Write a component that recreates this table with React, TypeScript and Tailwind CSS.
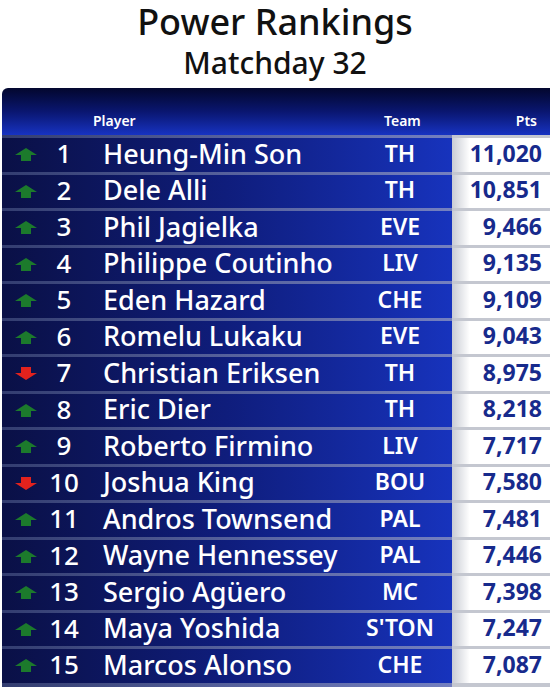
import React from "react"

type Row = {
    rank: number
    name: string
    team: string
    pts: string
    up: boolean
}

const rows: Row[] = [
    { rank: 1, name: "Heung-Min Son", team: "TH", pts: "11,020", up: true },
    { rank: 2, name: "Dele Alli", team: "TH", pts: "10,851", up: true },
    { rank: 3, name: "Phil Jagielka", team: "EVE", pts: "9,466", up: true },
    { rank: 4, name: "Philippe Coutinho", team: "LIV", pts: "9,135", up: true },
    { rank: 5, name: "Eden Hazard", team: "CHE", pts: "9,109", up: true },
    { rank: 6, name: "Romelu Lukaku", team: "EVE", pts: "9,043", up: true },
    { rank: 7, name: "Christian Eriksen", team: "TH", pts: "8,975", up: false },
    { rank: 8, name: "Eric Dier", team: "TH", pts: "8,218", up: true },
    { rank: 9, name: "Roberto Firmino", team: "LIV", pts: "7,717", up: true },
    { rank: 10, name: "Joshua King", team: "BOU", pts: "7,580", up: false },
    { rank: 11, name: "Andros Townsend", team: "PAL", pts: "7,481", up: true },
    { rank: 12, name: "Wayne Hennessey", team: "PAL", pts: "7,446", up: true },
    { rank: 13, name: "Sergio Agüero", team: "MC", pts: "7,398", up: true },
    { rank: 14, name: "Maya Yoshida", team: "S'TON", pts: "7,247", up: true },
    { rank: 15, name: "Marcos Alonso", team: "CHE", pts: "7,087", up: true },
]

// little house-shaped arrow, flipped for a drop
const Arrow = ({ up }: { up: boolean }) => (
    <svg width="22" height="13" viewBox="0 0 22 13" className={up ? "" : "rotate-180"}>
        <path d="M11 0 L22 7 L16 7 L16 13 L6 13 L6 7 L0 7 Z" fill={up ? "#1c7a2c" : "#e3221d"} />
    </svg>
)

const Divider = ({ h }: { h: string }) => (
    <div className={`${h} flex`}>
        <div className="w-[450px] bg-gradient-to-r from-[#333d70] via-[#56619c] to-[#7480c0]" />
        <div className="flex-1 bg-[#c4c7d0]" />
    </div>
)

const App = () => {
    return (
        <div className="w-[550px] h-[687px] bg-white overflow-hidden font-['Noto_Sans',sans-serif]">
            <div className="flex flex-col items-center h-[88px]">
                <h1 className="text-[36px] leading-[44px] font-medium text-[#111]">Power Rankings</h1>
                <h2 className="text-[30px] leading-[38px] font-medium text-[#111]">Matchday 32</h2>
            </div>

            <div className="ml-[2px] rounded-tl-[6px] overflow-hidden">
                <div className="h-[47px] flex items-end pb-[4px] bg-gradient-to-b from-[#03072e] via-[#0a1670] to-[#1733c2] text-white text-[14px] font-semibold">
                    <span className="ml-[91px]">Player</span>
                    <span className="ml-auto mr-[95px]">Team</span>
                    <span className="mr-[13px]">Pts</span>
                </div>

                {rows.map((r) => (
                    <div key={r.rank} className="h-[36.53px] flex flex-col">
                        <Divider h="h-[3px]" />
                        <div className="flex-1 flex items-center">
                            <div className="w-[450px] h-full flex items-center pb-[3px] bg-gradient-to-r from-[#0a1046] via-[#0f1d7c] to-[#1733bd] text-white font-medium">
                                <div className="w-[43px] flex justify-center pl-[4px] pt-[3px]">
                                    <Arrow up={r.up} />
                                </div>
                                <div className="w-[38px] text-center text-[26px] leading-none">{r.rank}</div>
                                <div className="ml-[20px] text-[27px] leading-none whitespace-nowrap">{r.name}</div>
                                <div className="ml-auto w-[100px] text-center text-[23px] font-semibold leading-none mr-[2px]">{r.team}</div>
                            </div>
                            <div className="flex-1 h-full flex items-center justify-end pr-[8px] pb-[3px] bg-gradient-to-r from-[#c9ccd4] via-white via-[18%] to-white text-[#172a8c] text-[23px] font-bold leading-none">
                                {r.pts}
                            </div>
                        </div>
                    </div>
                ))}
                <Divider h="h-[4px]" />
            </div>
        </div>
    )
}

export default App
